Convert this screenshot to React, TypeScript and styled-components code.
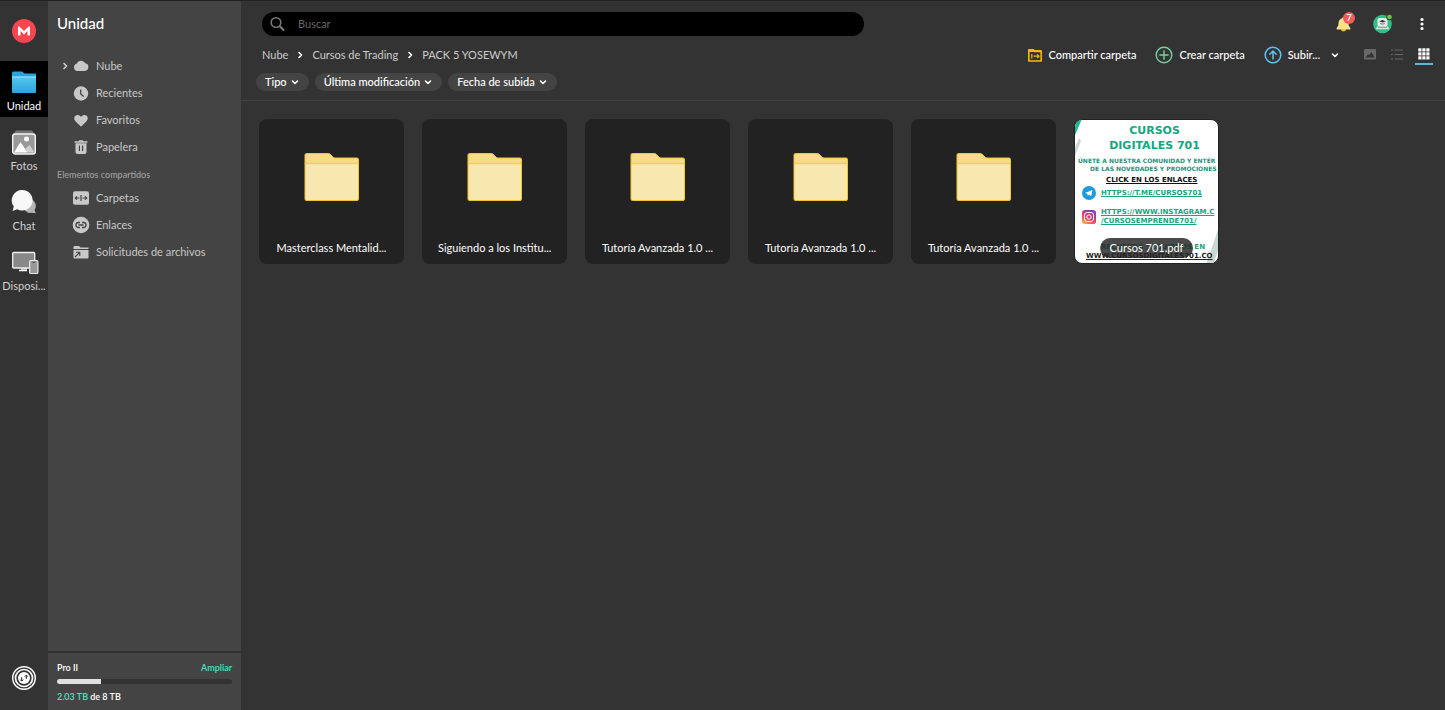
import React from "react";
import styled, { createGlobalStyle } from "styled-components";

const Global = createGlobalStyle`
  * { box-sizing: border-box; }
  body {
    margin: 0;
    background: #333;
    color: #fff;
    font: 400 11px/16px Lato, "Open Sans", sans-serif;
  }
  button, input, a { font: inherit; color: inherit; }
  button { background: none; border: 0; padding: 0; margin: 0; cursor: pointer; }
  a { text-decoration: none; }
  svg { display: block; flex: none; }
  ul, ol { list-style: none; margin: 0; padding: 0; }
`;

const Page = styled.div`
  display: flex;
  min-height: 100vh;
  border-top: 1px solid #222;
`;

const Rail = styled.nav`
  width: 48px;
  flex: none;
  display: flex;
  flex-direction: column;
  align-items: stretch;
  background: #333;
`;

const Logo = styled.a`
  display: flex;
  justify-content: center;
  padding: 18px 0;
  height: 60px;
`;

const RailLink = styled.a<{ $active?: boolean }>`
  height: 56px;
  margin-bottom: 4px;
  padding-top: 8px;
  display: flex;
  flex-direction: column;
  align-items: center;
  gap: 3px;
  background: ${(p) => (p.$active ? "#000" : "transparent")};
  color: ${(p) => (p.$active ? "#fff" : "#d0d0d0")};
  line-height: 16px;
`;

const TransferButton = styled.button`
  margin-top: auto;
  padding-bottom: 19px;
  display: flex;
  justify-content: center;
`;

const Sidebar = styled.aside`
  width: 193px;
  flex: none;
  display: flex;
  flex-direction: column;
  background: #444;
`;

const SideTitle = styled.h1`
  margin: 0;
  padding: 11px 9px 18px;
  height: 51px;
  font-size: 15px;
  line-height: 22px;
  font-weight: 500;
`;

const SideLink = styled.a`
  display: flex;
  align-items: center;
  height: 27px;
  padding-left: 24px;
  gap: 6px;
  color: #c8c8c8;
`;

const Expander = styled.button`
  width: 10px;
  height: 27px;
  margin-left: 12px;
  display: flex;
  align-items: center;
  justify-content: center;
  color: #d0d0d0;
`;

const CloudRow = styled.div`
  display: flex;
  align-items: center;
  & > a { padding-left: 2px; }
`;

const SideHeading = styled.h2`
  margin: 0;
  padding: 7px 9px 1px;
  font-size: 9px;
  line-height: 16px;
  font-weight: 500;
  color: #a0a0a0;
`;

const Quota = styled.section`
  margin-top: auto;
  height: 59px;
  padding: 7px 9px 0;
  border-top: 2px solid #333;
  font-size: 9px;
  font-weight: 600;
`;

const QuotaTop = styled.div`
  display: flex;
  justify-content: space-between;
`;

const Accent = styled.span`
  color: #4ce0c3;
`;

const UpgradeLink = styled.a`
  color: #4ce0c3;
`;

const Meter = styled.div`
  height: 5px;
  margin: 3px 0 5px;
  border-radius: 3px;
  background: #333;
  overflow: hidden;
`;

const MeterFill = styled.div`
  height: 100%;
  background: #e0e0e0;
`;

const Main = styled.main`
  flex: 1;
  min-width: 0;
`;

const TopBar = styled.header`
  display: flex;
  align-items: center;
  justify-content: space-between;
  padding: 11px 0 6px;
`;

const Search = styled.label`
  width: 50%;
  height: 24px;
  margin-left: 21px;
  border-radius: 12px;
  background: #000;
  display: flex;
  align-items: center;
  gap: 12px;
  padding: 0 8px;
  color: #777;
`;

const SearchInput = styled.input`
  flex: 1;
  min-width: 0;
  border: 0;
  outline: 0;
  padding: 0;
  background: transparent;
  color: #fff;
  &::placeholder { color: #666; opacity: 1; }
`;

const Account = styled.div`
  display: flex;
  align-items: center;
  gap: 18px;
  padding-right: 13px;
`;

const IconButton = styled.button`
  position: relative;
  width: 21px;
  height: 24px;
  display: flex;
  align-items: center;
  justify-content: center;
`;

const Badge = styled.span`
  position: absolute;
  top: 0;
  right: -1px;
  width: 12px;
  height: 12px;
  border-radius: 6px;
  background: #f7595b;
  font-size: 9px;
  line-height: 12px;
  font-weight: 700;
  text-align: center;
`;

const PathBar = styled.div`
  height: 26px;
  padding: 0 12px 0 21px;
  display: flex;
  align-items: center;
  justify-content: space-between;
`;

const Crumbs = styled.ol`
  display: flex;
  color: #ccc;
  li { display: flex; align-items: center; }
  svg { margin: 0 8px; color: #fff; }
`;

const Actions = styled.div`
  display: flex;
  align-items: center;
`;

const Action = styled.button`
  display: flex;
  align-items: center;
  gap: 6px;
  margin-right: 19px;
  font-weight: 500;
`;

const MenuArrow = styled.button`
  display: flex;
  margin: 0 22px 0 -8px;
`;

const ViewButton = styled.button<{ $active?: boolean }>`
  width: 18px;
  height: 20px;
  margin-right: 9px;
  display: flex;
  align-items: center;
  justify-content: center;
  color: ${(p) => (p.$active ? "#fff" : "#686868")};
  border-bottom: 2px solid ${(p) => (p.$active ? "#5cb7e0" : "transparent")};
  &:last-of-type { margin-right: 0; }
`;

const Filters = styled.div`
  display: flex;
  gap: 6px;
  padding: 5px 15px 9px;
  border-bottom: 1px solid #424242;
`;

const Filter = styled.button`
  height: 18px;
  border-radius: 9px;
  background: #444;
  padding: 0 10px 0 9px;
  display: flex;
  align-items: center;
  gap: 4px;
  font-weight: 500;
`;

const Grid = styled.ul`
  display: flex;
  flex-wrap: wrap;
  gap: 18px;
  padding: 18px;
`;

const Card = styled.li`
  width: 145px;
  height: 145px;
  border-radius: 8px;
  background: #222;
  display: flex;
  flex-direction: column;
  align-items: center;
  justify-content: space-between;
  padding: 33px 16px 8px;
`;

const CardName = styled.span`
  max-width: 100%;
  white-space: nowrap;
`;

const PdfCard = styled.li`
  position: relative;
  width: 145px;
  height: 145px;
  border: 1px solid #222;
  border-radius: 8px;
  overflow: hidden;
  background: #fff;
  font-family: "DejaVu Sans", sans-serif;
  font-weight: 700;
  color: #16a57f;
`;

const Stripes = styled.svg`
  position: absolute;
  inset: 0;
`;

const Sheet = styled.div`
  position: relative;
  white-space: nowrap;
`;

const SheetTitle = styled.div`
  padding: 3px 0 4px 16px;
  text-align: center;
  font-size: 11px;
  line-height: 15px;
`;

const SheetIntro = styled.div`
  padding-left: 3px;
  font-size: 6px;
  line-height: 8px;
  color: #2b8f79;
`;

const SheetIntroEnd = styled.div`
  padding-left: 12px;
`;

const SheetCta = styled.div`
  padding: 2px 0 0 31px;
  font-size: 7px;
  line-height: 10px;
  color: #111;
  text-decoration: underline;
`;

const SheetRow = styled.div`
  display: flex;
  align-items: center;
  gap: 5px;
  padding-left: 7px;
  height: 16px;
  margin-bottom: 8px;
  font-size: 7px;
  line-height: 9px;
  a { text-decoration: underline; }
`;

const SheetFooter = styled.div`
  padding: 9px 0 0 26px;
  font-size: 7px;
  line-height: 10px;
`;

const SheetSite = styled.div`
  padding-left: 11px;
  font-size: 7px;
  line-height: 9px;
  color: #222;
  text-decoration: underline;
`;

const PdfName = styled.span`
  position: absolute;
  left: 50%;
  bottom: 5px;
  transform: translateX(-50%);
  padding: 0 10px;
  border-radius: 10px;
  background: rgba(34, 34, 34, 0.82);
  color: #fff;
  font: 400 11px/20px Lato, sans-serif;
  white-space: nowrap;
`;

const Chevron = ({ down }: { down?: boolean }) => (
  <svg width="8" height="8" viewBox="0 0 8 8" fill="none" stroke="currentColor" strokeWidth="1.600" strokeLinecap="round" strokeLinejoin="round">
    <path d={down ? "M1.500 3 4 5.500 6.500 3" : "M3 1.500 5.500 4 3 6.500"} />
  </svg>
);

const MegaLogo = () => (
  <svg width="24" height="24" viewBox="0 0 24 24">
    <circle cx="12" cy="12" r="12" fill="#f9454f" />
    <path d="M6 7.600h1.500L12 12l4.500-4.400H18v8.800h-2.500v-4.300L12 15.500l-3.500-3.400v4.300H6z" fill="#fff" />
  </svg>
);

const DriveIcon = () => (
  <svg width="26" height="26" viewBox="0 0 26 26">
    <path d="M1 5V4a1.500 1.500 0 0 1 1.500-1.500h8.500l2.500 2H24a1 1 0 0 1 1 1V9H1z" fill="#2aa5dc" />
    <path d="M1 7.500h24V23a1 1 0 0 1-1 1H2a1 1 0 0 1-1-1z" fill="url(#driveFill)" />
    <path d="M1 8h24" stroke="#9be3fb" strokeWidth="1" />
    <defs>
      <linearGradient id="driveFill" x1="0" y1="0" x2="0" y2="1">
        <stop stopColor="#55c8f3" />
        <stop offset="1" stopColor="#2ba6de" />
      </linearGradient>
    </defs>
  </svg>
);

const PhotosIcon = () => (
  <svg width="26" height="26" viewBox="0 0 26 26">
    <path d="M5 1.500h16l2.500 3.500h-21z" fill="#777" />
    <rect x="1.700" y="5" width="22.600" height="20" rx="2.500" fill="#999" stroke="#f2f2f2" strokeWidth="1.400" />
    <path d="M3 23.500 9.500 13l7 10.500z" fill="#fff" />
    <path d="M14 20l4.500-4 5 7.500h-7z" fill="#d0d0d0" />
    <circle cx="15.500" cy="10" r="2.500" fill="#fff" />
  </svg>
);

const ChatIcon = () => (
  <svg width="26" height="26" viewBox="0 0 26 26">
    <path d="M18 10a7 7 0 0 1 5.500 11l1.300 3.300-4-.5A7 7 0 1 1 18 10z" fill="#b5b5b5" />
    <path d="M11.300 1a10.300 10.300 0 1 1-5 19.300L1.500 22l1.300-4.600A10.300 10.300 0 0 1 11.300 1z" fill="#f8f8f8" />
  </svg>
);

const DevicesIcon = () => (
  <svg width="30" height="26" viewBox="0 0 30 26">
    <path d="M12 19h6v3h-6z" fill="#aaa" />
    <path d="M10 21.500h8" stroke="#fff" strokeWidth="1.500" />
    <rect x="3.700" y="3.500" width="22" height="15.500" rx="1" fill="#888" stroke="#f0f0f0" strokeWidth="1.300" />
    <rect x="20.600" y="11.500" width="8.300" height="13" rx="1.300" fill="#999" stroke="#e8e8e8" strokeWidth="1.200" />
    <path d="M23.500 13.300h2.500" stroke="#444" />
  </svg>
);

const TransferIcon = () => (
  <svg width="26" height="26" viewBox="0 0 26 26" fill="none">
    <circle cx="13" cy="13" r="11.300" stroke="#fff" strokeWidth="1.400" />
    <circle cx="13" cy="13" r="8.500" stroke="#fff" strokeWidth="1.700" />
    <circle cx="13" cy="13" r="6" fill="#fff" />
    <path d="M10.700 12.200v3.600M9.200 14.600l1.500 1.500 1.500-1.500M15.300 14v-3.600M13.800 11.600l1.500-1.500 1.500 1.500" stroke="#222" strokeWidth="1" />
  </svg>
);

type SideKind = "cloud" | "clock" | "heart" | "trash" | "folders" | "link" | "request";

const sidePaths: Record<SideKind, React.ReactNode> = {
  cloud: <path d="M5.300 14A3.700 3.700 0 0 1 4.600 6.800 4.800 4.800 0 0 1 13.300 6.300 3.900 3.900 0 0 1 12.800 14z" fill="currentColor" />,
  clock: (
    <>
      <circle cx="9" cy="9.500" r="7.200" fill="currentColor" />
      <path d="M8.700 5.500V10l3 2.500" fill="none" stroke="#444" strokeWidth="1.300" />
    </>
  ),
  heart: <path d="M9 15.800 3.700 10.500C.8 7.400 2.700 4 5.600 4c1.500 0 2.700.8 3.400 2 .7-1.200 1.900-2 3.400-2 2.900 0 4.800 3.400 1.900 6.500z" fill="currentColor" />,
  trash: (
    <>
      <path d="M2.500 3.200h4l.8-1h3.400l.8 1h4v1.600h-13zM3.500 5.300h11V14a2 2 0 0 1-2 2h-7a2 2 0 0 1-2-2z" fill="currentColor" />
      <path d="M7.400 7.500v5.500M10.600 7.500v5.500" stroke="#444" strokeWidth="1.200" />
    </>
  ),
  folders: (
    <>
      <rect x="1" y="2.200" width="16" height="13.600" rx="2" fill="currentColor" />
      <path d="M9 6v6M7.500 9h-4M5 7.300 3.300 9 5 10.700M10.500 9h4M13 7.300 14.700 9 13 10.700" fill="none" stroke="#444" strokeWidth="1.200" />
    </>
  ),
  link: (
    <>
      <circle cx="9" cy="9" r="8.300" fill="currentColor" />
      <path d="M8 6.500H6.500a2.500 2.500 0 0 0 0 5H8M10 6.500h1.500a2.500 2.500 0 0 1 0 5H10M6.500 9h5" fill="none" stroke="#444" strokeWidth="1.300" />
    </>
  ),
  request: (
    <>
      <path d="M1.500 4a1 1 0 0 1 1-1h4.500l1.500 1.500h8V6h-15zM1.500 7h15v7.500a1 1 0 0 1-1 1h-13a1 1 0 0 1-1-1z" fill="currentColor" />
      <path d="M3 14 7.500 9.500M4 9.200h3.800V13" fill="none" stroke="#444" strokeWidth="1.100" />
    </>
  ),
};

const SideIcon = ({ kind }: { kind: SideKind }) => (
  <svg width="18" height="18" viewBox="0 0 18 18">{sidePaths[kind]}</svg>
);

const SideItem = ({ kind, children }: { kind: SideKind; children: React.ReactNode }) => (
  <SideLink href="#">
    <SideIcon kind={kind} />
    {children}
  </SideLink>
);

const FolderArt = () => (
  <svg width="56" height="50" viewBox="0 0 56 50">
    <path d="M1 12V3A1.500 1.500 0 0 1 2.500 1.500h22q1 0 1.800.8l2.700 2.800q.8.900 2 .9H53A1.500 1.500 0 0 1 54.500 7.500V12z" fill="#f5dc8c" stroke="#efc42f" />
    <path d="M1 11.500h53.500V47A1.500 1.500 0 0 1 53 48.500H2.500A1.500 1.500 0 0 1 1 47z" fill="#f7e8b0" stroke="#efc42f" />
    <path d="M1.500 11.500h52.500" stroke="#f3cf57" strokeWidth="1.500" />
  </svg>
);

const folders = [
  "Masterclass Mentalid...",
  "Siguiendo a los Institu...",
  "Tutoría Avanzada 1.0 ...",
  "Tutoría Avanzada 1.0 ...",
  "Tutoría Avanzada 1.0 ...",
];

const usedTb = 2.03;
const totalTb = 8;

export default function App() {
  return (
    <>
      <Global />
      <Page>
        <Rail aria-label="Secciones">
          <Logo href="#" aria-label="MEGA"><MegaLogo /></Logo>
          <RailLink href="#" $active><DriveIcon />Unidad</RailLink>
          <RailLink href="#"><PhotosIcon />Fotos</RailLink>
          <RailLink href="#"><ChatIcon />Chat</RailLink>
          <RailLink href="#"><DevicesIcon />Disposi...</RailLink>
          <TransferButton aria-label="Transferencias"><TransferIcon /></TransferButton>
        </Rail>

        <Sidebar>
          <SideTitle>Unidad</SideTitle>
          <CloudRow>
            <Expander aria-label="Expandir"><Chevron /></Expander>
            <SideItem kind="cloud">Nube</SideItem>
          </CloudRow>
          <SideItem kind="clock">Recientes</SideItem>
          <SideItem kind="heart">Favoritos</SideItem>
          <SideItem kind="trash">Papelera</SideItem>
          <SideHeading>Elementos compartidos</SideHeading>
          <SideItem kind="folders">Carpetas</SideItem>
          <SideItem kind="link">Enlaces</SideItem>
          <SideItem kind="request">Solicitudes de archivos</SideItem>
          <Quota>
            <QuotaTop>
              <span>Pro II</span>
              <UpgradeLink href="#">Ampliar</UpgradeLink>
            </QuotaTop>
            <Meter><MeterFill style={{ width: `${(usedTb / totalTb) * 100}%` }} /></Meter>
            <div><Accent>{usedTb} TB</Accent> de {totalTb} TB</div>
          </Quota>
        </Sidebar>

        <Main>
          <TopBar>
            <Search>
              <svg width="16" height="16" viewBox="0 0 16 16" fill="none" stroke="currentColor" strokeLinecap="round">
                <circle cx="6" cy="6.500" r="4.800" strokeWidth="1.600" />
                <path d="m10 10.500 3.500 3.500" strokeWidth="2.200" />
              </svg>
              <SearchInput type="text" placeholder="Buscar" aria-label="Buscar" />
            </Search>
            <Account>
              <IconButton aria-label="Notificaciones">
                <svg width="18" height="18" viewBox="0 0 18 18">
                  <path d="M6 14h5a2.500 2.500 0 0 1-5 0z" fill="#e9b916" />
                  <path d="M8.500 2a1.300 1.300 0 0 1 1.300 1.300c2.700.7 3.700 3 3.700 5.200 0 2 .7 3 1.700 4.200.6.800.2 1.800-.7 1.800h-12c-.9 0-1.300-1-.7-1.800 1-1.200 1.700-2.200 1.700-4.200 0-2.200 1-4.500 3.700-5.200A1.300 1.300 0 0 1 8.500 2z" fill="#fbe08a" />
                </svg>
                <Badge>7</Badge>
              </IconButton>
              <IconButton aria-label="Cuenta">
                <svg width="20" height="20" viewBox="0 0 20 20">
                  <circle cx="9.500" cy="10" r="9.300" fill="#2cc184" />
                  <rect x="4.500" y="4" width="10" height="8.500" rx="2" fill="#e9e9e9" />
                  <path d="m6.200 7.300 3.300-1.300 3.300 1.300-3.300 1.300z" fill="#333" />
                  <path d="M7.800 8.700v1.300h3.400V8.700" fill="none" stroke="#666" strokeWidth=".8" />
                  <path d="M4 12.500h11l1.300 2.800H2.700z" fill="#dedede" />
                  <path d="M5 13.500h9" stroke="#888" strokeWidth=".7" />
                  <circle cx="16.500" cy="3" r="3.200" fill="#333" />
                  <circle cx="16.500" cy="3" r="2.300" fill="#66c947" />
                </svg>
              </IconButton>
              <IconButton aria-label="Menú">
                <svg width="6" height="16" viewBox="0 0 6 16" fill="#fff">
                  <circle cx="3" cy="3.500" r="1.600" />
                  <circle cx="3" cy="8" r="1.600" />
                  <circle cx="3" cy="12.500" r="1.600" />
                </svg>
              </IconButton>
            </Account>
          </TopBar>

          <PathBar>
            <Crumbs>
              <li><a href="#">Nube</a><Chevron /></li>
              <li><a href="#">Cursos de Trading</a><Chevron /></li>
              <li><a href="#">PACK 5 YOSEWYM</a></li>
            </Crumbs>
            <Actions>
              <Action>
                <svg width="16" height="16" viewBox="0 0 16 16" fill="none" stroke="#fdb900" strokeWidth="1.600">
                  <path d="M1.800 2.800h4.700L8 4.500h6.200V14H1.800z" strokeLinejoin="round" />
                  <path d="M1.500 4h13" strokeWidth="2" />
                  <path d="M4.800 7v4.500M6.500 9.200H12M10.200 7.300 12 9.200l-1.800 2" strokeWidth="1.200" />
                </svg>
                Compartir carpeta
              </Action>
              <Action>
                <svg width="18" height="18" viewBox="0 0 18 18" fill="none" stroke="#75d0a2" strokeWidth="1.400" strokeLinecap="round">
                  <circle cx="9" cy="9" r="7.800" />
                  <path d="M9 4.800v8.400M4.800 9h8.400" />
                </svg>
                Crear carpeta
              </Action>
              <Action>
                <svg width="18" height="18" viewBox="0 0 18 18" fill="none" stroke="#5cc5f5" strokeWidth="1.500" strokeLinecap="round" strokeLinejoin="round">
                  <circle cx="9" cy="9" r="7.800" />
                  <path d="M9 13V5.200M5.800 8.200 9 5l3.200 3.200" />
                </svg>
                Subir...
              </Action>
              <MenuArrow aria-label="Opciones de subida"><Chevron down /></MenuArrow>
              <ViewButton aria-label="Vista multimedia">
                <svg width="12" height="12" viewBox="0 0 12 12">
                  <rect y="1" width="12" height="10.500" rx="1" fill="currentColor" />
                  <path d="m1.500 9.500 2.700-3.500 1.200 1L7.500 4l3 5.500z" fill="#333" />
                </svg>
              </ViewButton>
              <ViewButton aria-label="Vista de lista">
                <svg width="12" height="12" viewBox="0 0 12 12" stroke="currentColor" strokeWidth="1.200">
                  <path d="M0 2h2M3.500 2H12M0 6.500h2M3.500 6.500H12M0 11h2M3.500 11H12" />
                </svg>
              </ViewButton>
              <ViewButton aria-label="Vista de cuadrícula" $active>
                <svg width="12" height="12" viewBox="0 0 12 12" fill="currentColor">
                  {[0, 4, 8].map((y) => [0, 4, 8].map((x) => <rect key={`${x}-${y}`} x={x + 0.3} y={y + 0.3} width="3.200" height="3.200" />))}
                </svg>
              </ViewButton>
            </Actions>
          </PathBar>

          <Filters>
            {["Tipo", "Última modificación", "Fecha de subida"].map((label) => (
              <Filter key={label}>{label}<Chevron down /></Filter>
            ))}
          </Filters>

          <Grid>
            {folders.map((name, i) => (
              <Card key={i}>
                <FolderArt />
                <CardName>{name}</CardName>
              </Card>
            ))}
            <PdfCard>
              <Stripes width="145" height="145" viewBox="0 0 145 145">
                <path d="M0 0h6.500L0 15z" fill="#16b890" />
                <path d="M4 18 0 28v8l6-15zM145 104l-14 41h7l7-20z" fill="#cad7d5" />
              </Stripes>
              <Sheet>
                <SheetTitle>CURSOS<br />DIGITALES 701</SheetTitle>
                <SheetIntro>
                  ÚNETE A NUESTRA COMUNIDAD Y ENTÉR
                  <SheetIntroEnd>DE LAS NOVEDADES Y PROMOCIONES</SheetIntroEnd>
                </SheetIntro>
                <SheetCta>CLICK EN LOS ENLACES</SheetCta>
                <SheetRow>
                  <svg width="14" height="14" viewBox="0 0 14 14">
                    <circle cx="7" cy="7" r="7" fill="#1d9cdb" />
                    <path d="m3 7 7.500-3-1.300 6.300-2.200-1.700-1.200 1.200-.3-2.100z" fill="#fff" />
                  </svg>
                  <a href="#">HTTPS://T.ME/CURSOS701</a>
                </SheetRow>
                <SheetRow>
                  <svg width="14" height="14" viewBox="0 0 14 14" fill="none" stroke="#fff">
                    <defs>
                      <linearGradient id="insta" x1="0" y1="1" x2=".6" y2="0">
                        <stop stopColor="#fdc13b" />
                        <stop offset=".5" stopColor="#ee3a60" />
                        <stop offset="1" stopColor="#8a38c8" />
                      </linearGradient>
                    </defs>
                    <rect width="14" height="14" rx="3" fill="url(#insta)" stroke="none" />
                    <rect x="2.500" y="2.500" width="9" height="9" rx="2.500" />
                    <circle cx="7" cy="7" r="2.200" />
                  </svg>
                  <a href="#">HTTPS://WWW.INSTAGRAM.C<br />/CURSOSEMPRENDE701/</a>
                </SheetRow>
                <SheetFooter>RECUERDA SEGUIRNOS EN</SheetFooter>
                <SheetSite>WWW.CURSOSDIGITALES701.CO</SheetSite>
              </Sheet>
              <PdfName>Cursos 701.pdf</PdfName>
            </PdfCard>
          </Grid>
        </Main>
      </Page>
    </>
  );
}
